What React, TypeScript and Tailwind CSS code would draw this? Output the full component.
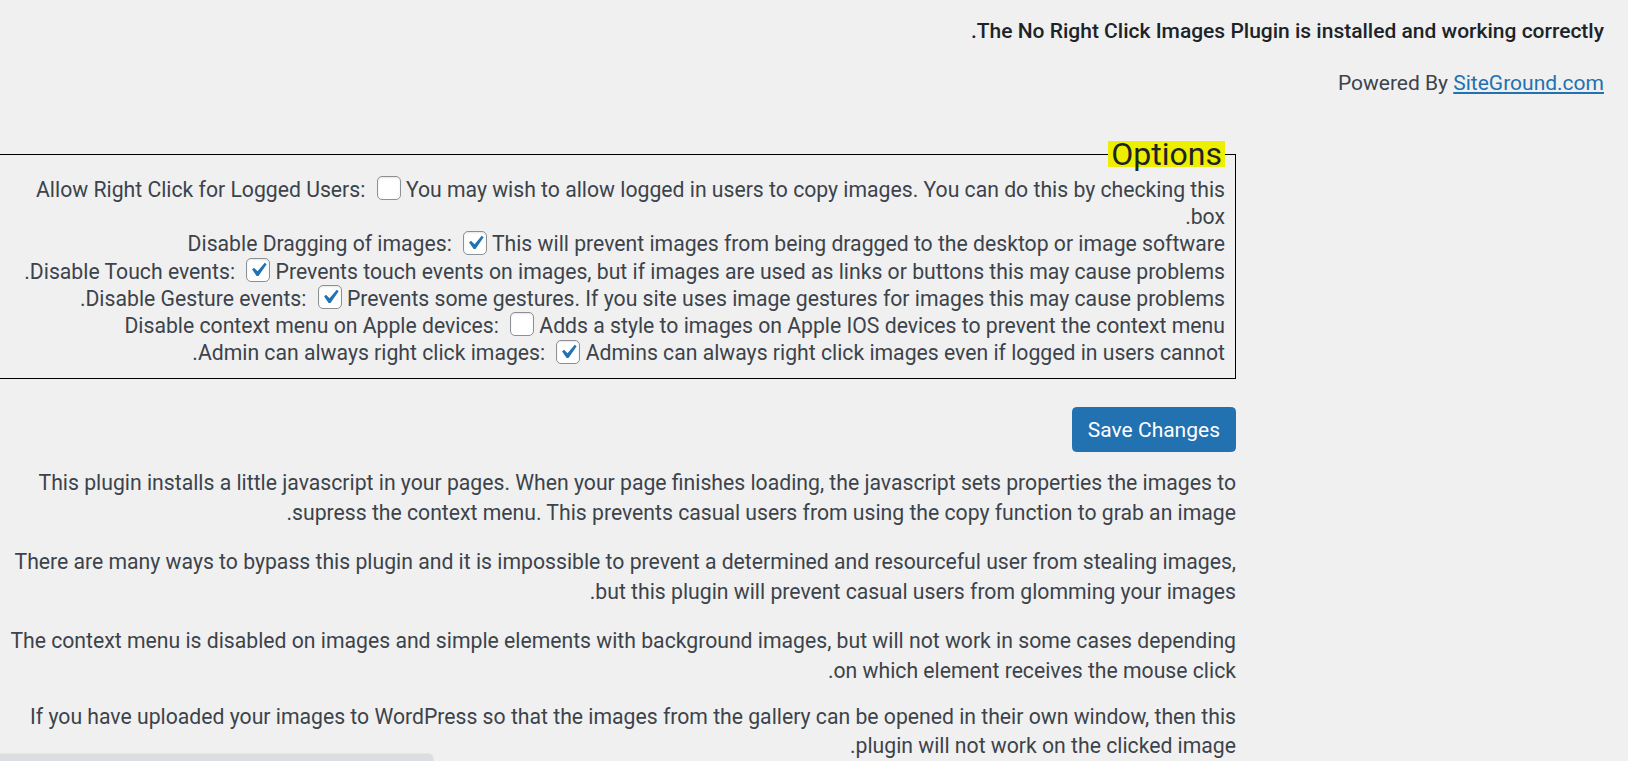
import React from "react";

function Checkbox({ checked }: { checked: boolean }) {
  return (
    <span className="relative inline-block w-[24px] h-[24px] -mt-[6px] ml-[6px] align-middle rounded-[5px] border border-[#8c8f94] bg-white shadow-[inset_0_1px_2px_rgba(0,0,0,0.1)]">
      {checked && (
        <svg viewBox="0 0 20 20" className="absolute -top-[3px] -left-[3px] w-[28px] h-[28px]">
          <path d="M14.83 4.89l1.34.94-5.81 8.38H9.02L5.78 9.67l1.34-1.25 2.57 2.4z" fill="#2271b1" />
        </svg>
      )}
    </span>
  );
}

type Row = { label: string; checked: boolean; desc: React.ReactNode };

const rows: Row[] = [
  {
    label: "Allow Right Click for Logged Users:",
    checked: false,
    desc: (
      <>
        You may wish to allow logged in users to copy images. You can do this by checking this
        <br />
        box.
      </>
    ),
  },
  {
    label: "Disable Dragging of images:",
    checked: true,
    desc: "This will prevent images from being dragged to the desktop or image software",
  },
  {
    label: "Disable Touch events:",
    checked: true,
    desc: "Prevents touch events on images, but if images are used as links or buttons this may cause problems.",
  },
  {
    label: "Disable Gesture events:",
    checked: true,
    desc: "Prevents some gestures. If you site uses image gestures for images this may cause problems.",
  },
  {
    label: "Disable context menu on Apple devices:",
    checked: false,
    desc: "Adds a style to images on Apple IOS devices to prevent the context menu",
  },
  {
    label: "Admin can always right click images:",
    checked: true,
    desc: "Admins can always right click images even if logged in users cannot.",
  },
];

export default function App() {
  return (
    <div
      dir="rtl"
      className="relative min-h-screen overflow-hidden bg-[#f0f0f1] pr-[24px] font-['Roboto',sans-serif] text-[21.2px] leading-[30px] text-[#3c434a]"
    >
      {/* notice + credit */}
      <p className="mt-[16px] text-[21px] font-medium text-[#1d2327]">
        The No Right Click Images Plugin is installed and working correctly.
      </p>
      <p className="mt-[22px] text-[21px]">
        Powered By{" "}
        <a href="#" className="text-[#2271b1] underline">
          SiteGround.com
        </a>
      </p>

      <form className="mr-[368px]">
        <fieldset className="mt-[43px] border-y border-r border-l-0 border-black pr-[10px] pt-[9px] pb-[12px]">
          <legend className="bg-[#eeee00] px-[3px] text-[32px] leading-[26px] text-[#1d2327]">Options</legend>
          {rows.map((r) => (
            <div key={r.label} className="whitespace-nowrap leading-[27.2px]">
              {r.label} <Checkbox checked={r.checked} /> {r.desc}
            </div>
          ))}
        </fieldset>

        <div className="mt-[28px]">
          <button
            type="button"
            className="h-[45px] rounded-[4.5px] border border-[#2271b1] bg-[#2271b1] px-[15px] text-[21px] text-white"
          >
            Save Changes
          </button>
        </div>

        <div className="whitespace-nowrap">
          <p className="mt-[16px]">
            This plugin installs a little javascript in your pages. When your page finishes loading, the javascript sets properties the images to
            <br />
            supress the context menu. This prevents casual users from using the copy function to grab an image.
          </p>
          <p className="mt-[19px]">
            There are many ways to bypass this plugin and it is impossible to prevent a determined and resourceful user from stealing images,{"\u200E"}
            <br />
            but this plugin will prevent casual users from glomming your images.
          </p>
          <p className="mt-[19px]">
            The context menu is disabled on images and simple elements with background images, but will not work in some cases depending
            <br />
            on which element receives the mouse click.
          </p>
          <p className="mt-[16px] leading-[29px]">
            If you have uploaded your images to WordPress so that the images from the gallery can be opened in their own window, then this
            <br />
            plugin will not work on the clicked image.
          </p>
        </div>
      </form>

      {/* horizontal scrollbar thumb */}
      <div className="fixed bottom-0 left-0 h-[8px] w-[434px] rounded-tr-[6px] border-t border-r border-[#e4e5e7] bg-[#dcdde0]" />
    </div>
  );
}
